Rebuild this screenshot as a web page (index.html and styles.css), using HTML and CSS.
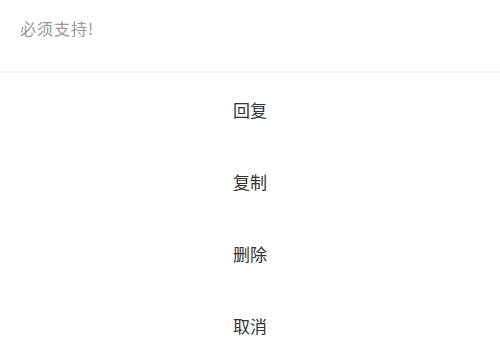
FILE: index.html
```html
<!DOCTYPE html>
<html lang="zh-CN">
<head>
    <meta charset="UTF-8">
    <meta name="viewport" content="width=device-width, initial-scale=1.0">
    <title>评论操作</title>
    <link rel="stylesheet" href="styles.css">
</head>
<body>
    <div class="comment">必须支持!</div>
    <ul class="action-sheet">
        <li class="action">回复</li>
        <li class="action">复制</li>
        <li class="action">删除</li>
        <li class="action">取消</li>
    </ul>
</body>
</html>
```

FILE: styles.css
```css
body {
    margin: 0;
    background: #fff;
    font-family: "Noto Sans CJK SC", "Noto Sans", sans-serif;
}
.comment {
    height: 73px;
    box-sizing: border-box;
    padding: 16px 20px 0;
    font-size: 16px;
    line-height: 24px;
    letter-spacing: 1px;
    color: #999;
    border-bottom: 2px solid #f5f5f5;
}
.action-sheet {
    list-style: none;
    margin: 0;
    padding: 0;
}
.action {
    height: 72px;
    display: flex;
    align-items: center;
    justify-content: center;
    font-size: 17px;
    color: #333;
}
```
